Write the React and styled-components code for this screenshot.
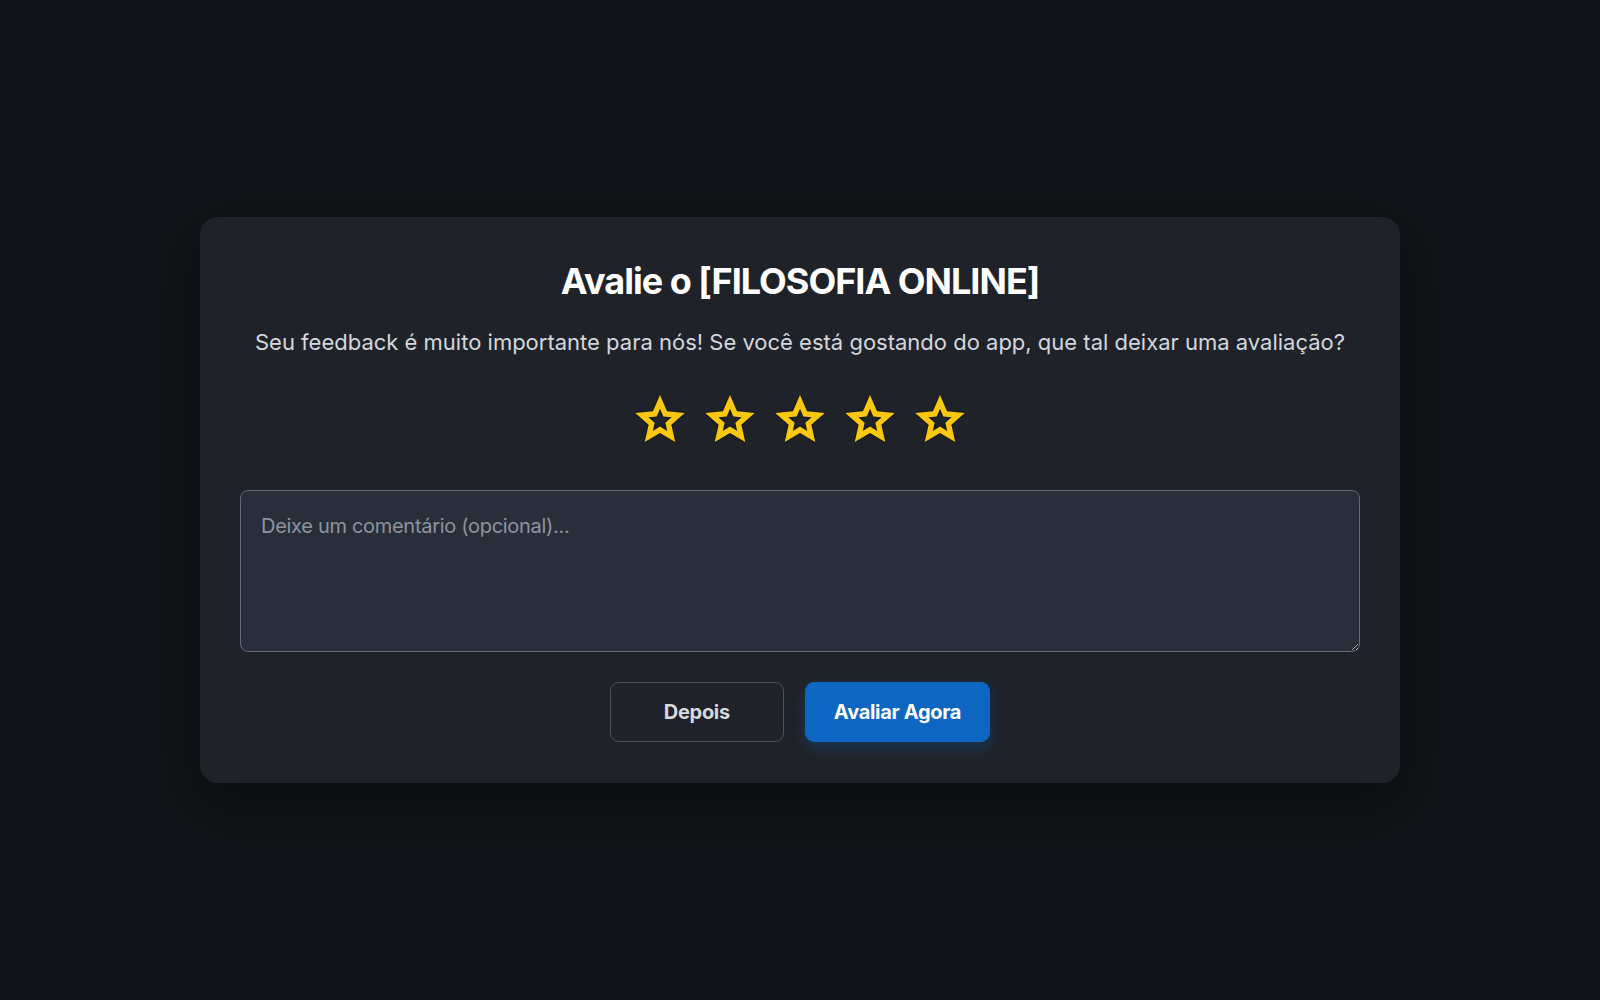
import React, { useState } from "react";
import styled, { createGlobalStyle } from "styled-components";

const GlobalStyle = createGlobalStyle`
  * { box-sizing: border-box; }
  html, body { margin: 0; padding: 0; background: #111418; }
  body { font-family: Inter, "Noto Sans", sans-serif; }
`;

const Page = styled.div`
  min-height: 100vh;
  display: flex;
  align-items: center;
  justify-content: center;
  background: #111418;
`;

const Card = styled.div`
  width: 1200px;
  background: #1f2329;
  border-radius: 18px;
  padding: 40px 40px 41px;
  display: flex;
  flex-direction: column;
  align-items: center;
  box-shadow: 0 20px 60px rgba(0, 0, 0, 0.45);
`;

const Title = styled.h1`
  margin: 0;
  font-size: 36px;
  line-height: 48px;
  font-weight: 700;
  letter-spacing: -1px;
  color: #ffffff;
`;

const Subtitle = styled.p`
  margin: 22px 0 0;
  font-size: 22px;
  line-height: 30px;
  font-weight: 400;
  letter-spacing: 0;
  color: #d3d7dd;
`;

const Stars = styled.div`
  margin-top: 36px;
  display: flex;
  gap: 14px;
`;

const StarButton = styled.button`
  width: 56px;
  height: 56px;
  padding: 0;
  border: none;
  background: transparent;
  cursor: pointer;
  display: flex;
  align-items: center;
  justify-content: center;
  svg {
    width: 56px;
    height: 56px;
    fill: ${(p) => p.$color};
    filter: drop-shadow(0 0 1px rgba(0, 0, 0, 0.7));
  }
`;

const Comment = styled.textarea`
  margin-top: 41px;
  width: 100%;
  height: 162px;
  background: #282f3a;
  border: 1px solid #636b78;
  border-radius: 8px;
  padding: 20px;
  font-family: Inter, "Noto Sans", sans-serif;
  font-size: 20px;
  line-height: 30px;
  letter-spacing: -0.3px;
  color: #e6e8eb;
  outline: none;
  resize: vertical;
  &::placeholder {
    color: #8d949f;
  }
`;

const Actions = styled.div`
  margin-top: 30px;
  display: flex;
  gap: 21px;
`;

const Button = styled.button`
  height: 60px;
  padding: 0 ${(p) => (p.$primary ? "28px" : "40px")};
  min-width: ${(p) => (p.$primary ? "185px" : "174px")};
  border-radius: 9px;
  font-family: Inter, "Noto Sans", sans-serif;
  font-size: 20px;
  font-weight: 700;
  letter-spacing: -0.3px;
  cursor: pointer;
  border: 1px solid ${(p) => (p.$primary ? "#0d66c2" : "#4a515c")};
  background: ${(p) => (p.$primary ? "#0d66c2" : "transparent")};
  color: ${(p) => (p.$primary ? "#ffffff" : "#d6d9de")};
  box-shadow: ${(p) =>
    p.$primary ? "0 6px 16px rgba(13, 102, 194, 0.28)" : "none"};
`;

/* five-point star ring (outline star): outer star minus a scaled copy */
const starPoints = (R, ratio) => {
  const pts = [];
  for (let i = 0; i < 10; i++) {
    const rad = i % 2 === 0 ? R : R * ratio;
    const a = (-90 + i * 36) * (Math.PI / 180);
    pts.push(`${(rad * Math.cos(a)).toFixed(2)},${(rad * Math.sin(a)).toFixed(2)}`);
  }
  return "M" + pts.join("L") + "Z";
};

const R_OUT = 26;
const RATIO = 0.46;
const HOLE = 0.47;
const STAR_PATH =
  starPoints(R_OUT, RATIO) + " " + starPoints(R_OUT * HOLE, RATIO);

const StarIcon = () => (
  <svg viewBox="-28 -28 56 56" aria-hidden="true">
    <path fillRule="evenodd" d={STAR_PATH} />
  </svg>
);

export default function App() {
  const [comment, setComment] = useState("");
  return (
    <>
      <GlobalStyle />
      <Page>
        <Card>
          <Title>Avalie o [FILOSOFIA ONLINE]</Title>
          <Subtitle>
            Seu feedback é muito importante para nós! Se você está gostando do app, que tal deixar uma avaliação?
          </Subtitle>
          <Stars>
            {[1, 2, 3, 4, 5].map((n) => (
              <StarButton key={n} $color="#f9c80f" aria-label={`${n} estrelas`}>
                <StarIcon />
              </StarButton>
            ))}
          </Stars>
          <Comment
            placeholder="Deixe um comentário (opcional)..."
            value={comment}
            onChange={(e) => setComment(e.target.value)}
          />
          <Actions>
            <Button>Depois</Button>
            <Button $primary>Avaliar Agora</Button>
          </Actions>
        </Card>
      </Page>
    </>
  );
}
